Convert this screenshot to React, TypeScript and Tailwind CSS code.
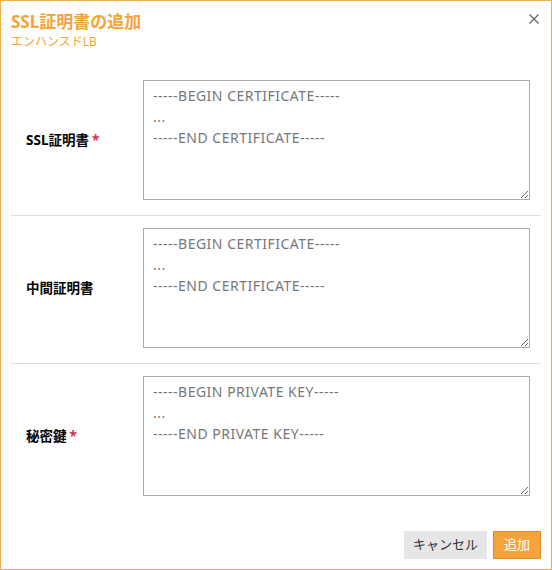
const font = { fontFamily: '"Noto Sans", "Noto Sans CJK JP", sans-serif' };

function Row({ label, required, begin, end, last }: { label: string; required?: boolean; begin: string; end: string; last?: boolean }) {
  return (
    <div className={`flex items-center pt-3 pb-[15px] ${last ? "" : "border-b border-[#dddddd]"}`}>
      <div className="w-[132px] pl-[15px] text-[13.5px] font-bold text-black">
        {label}
        {required && <span className="ml-[3px] text-[#d9304f]">*</span>}
      </div>
      <textarea
        className="h-[120px] w-[387px] resize-y border border-[#aaaaaa] bg-white px-[9px] py-[4px] text-[14px] leading-[21px] tracking-[0.5px] text-[#777] outline-none"
        defaultValue={`-----${begin}-----\n...\n-----${end}-----`}
        style={font}
      />
    </div>
  );
}

export default function App() {
  return (
    <div className="h-[570px] w-[552px] border border-[#f0ad4e] bg-white" style={font}>
      <div className="flex items-start justify-between pl-[10px] pr-3 pt-[9px]">
        <div>
          <div className="text-[17px] font-bold leading-[24px] text-[#f5a33a]">SSL証明書の追加</div>
          <div className="text-[12px] leading-[16px] text-[#f5a33a]">エンハンスドLB</div>
        </div>
        <svg width="10" height="10" viewBox="0 0 10 10" className="mt-[4px]">
          <path d="M0.5 0.5 L9.5 9.5 M9.5 0.5 L0.5 9.5" stroke="#666" strokeWidth="1.3" />
        </svg>
      </div>
      <div className="mx-[10px] mt-[18px]">
        <Row label="SSL証明書" required begin="BEGIN CERTIFICATE" end="END CERTIFICATE" />
        <Row label="中間証明書" begin="BEGIN CERTIFICATE" end="END CERTIFICATE" />
        <Row label="秘密鍵" required begin="BEGIN PRIVATE KEY" end="END PRIVATE KEY" last />
      </div>
      <div className="mt-5 flex justify-end gap-[6px] pr-[10px]">
        <button className="h-[28px] w-[83px] bg-[#e6e6e6] text-[13px] text-[#333]">キャンセル</button>
        <button className="h-[28px] w-[48px] border border-[#e08a2a] bg-[#f5a33a] text-[13px] text-white">追加</button>
      </div>
    </div>
  );
}
